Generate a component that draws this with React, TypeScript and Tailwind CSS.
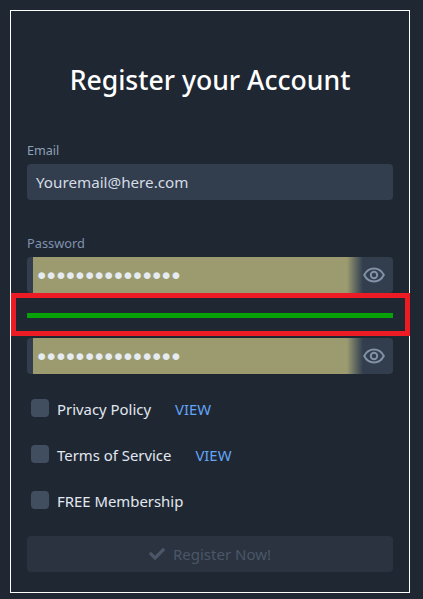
import React from 'react';
import { FaCheck } from 'react-icons/fa';

const EyeIcon = () => (
  <svg width="22" height="16" viewBox="0 0 22 16" fill="none" stroke="#8291a7" strokeWidth="2">
    <path d="M1.2 8C3.4 3.8 6.9 1.6 11 1.6S18.6 3.800 20.800 8C18.600 12.200 15.100 14.400 11 14.400S3.400 12.200 1.200 8Z" />
    <circle cx="11" cy="8" r="3.200" />
  </svg>
);

const PasswordField = () => (
  <div className="flex h-9 w-full overflow-hidden rounded bg-[#323e4e]">
    <div className="ml-[6px] flex h-full w-[314px] items-center bg-[#9b9b6f] pl-[4px] text-[#e6ebf2]">
      <span className="text-[15.500px] leading-none tracking-[0.220px] whitespace-nowrap font-['Liberation_Sans',sans-serif]">●●●●●●●●●●●●●●●</span>
    </div>
    <div className="h-full w-[16px] bg-gradient-to-r from-[#9b9b6f] to-[#323e4e]" />
    <div className="flex flex-1 items-center">
      <EyeIcon />
    </div>
  </div>
);

const CheckRow = ({ label, view }: { label: string; view?: boolean }) => (
  <div className="flex h-[18px] items-center pl-1">
    <div className="h-[18px] w-[18px] rounded bg-[#414e60]" />
    <span className="ml-2 pt-[2px] text-[14.900px] text-[#e2e8f0]">{label}</span>
    {view && <span className="ml-6 pt-[2px] text-[14.900px] text-[#63a4f5]">VIEW</span>}
  </div>
);

export default function App() {
  return (
    <div className="h-[599px] w-[423px] overflow-hidden bg-[#1f2733] pt-[10px] pl-[10px] font-['Noto_Sans',sans-serif]">
      <div className="relative h-[583px] w-[400px] border border-white px-4">
        <h1 className="mt-[49px] text-center text-[26.600px] leading-[40px] font-medium text-white">Register your Account</h1>

        <label className="mt-[41px] block text-[12.600px] leading-[20px] text-[#8fa0b8]">Email</label>
        <div className="mt-[3px] flex h-9 items-center rounded bg-[#323e4e] px-[9px] text-[15.200px] text-[#d5dce6]">Youremail@here.com</div>

        <label className="mt-[33px] block text-[12.800px] leading-[20px] text-[#7f92ad]">Password</label>
        <div className="mt-[4px]"><PasswordField /></div>

        <div className="mt-[20px] h-[5px] bg-[#07a207]" />

        <div className="mt-[20px]"><PasswordField /></div>

        <div className="mt-[25px] flex flex-col gap-7">
          <CheckRow label="Privacy Policy" view />
          <CheckRow label="Terms of Service" view />
          <CheckRow label="FREE Membership" />
        </div>

        <div className="mt-[27px] flex h-9 items-center justify-center gap-2 rounded bg-[#2a333f] text-[15px] text-[#4b5768]">
          <FaCheck size={16} />
          <span>Register Now!</span>
        </div>

        {/* annotation drawn over the strength bar */}
        <div className="absolute top-[282px] left-[0px] h-[43px] w-[399px] border-[5px] border-[#ed1c24]" />
      </div>
    </div>
  );
}
